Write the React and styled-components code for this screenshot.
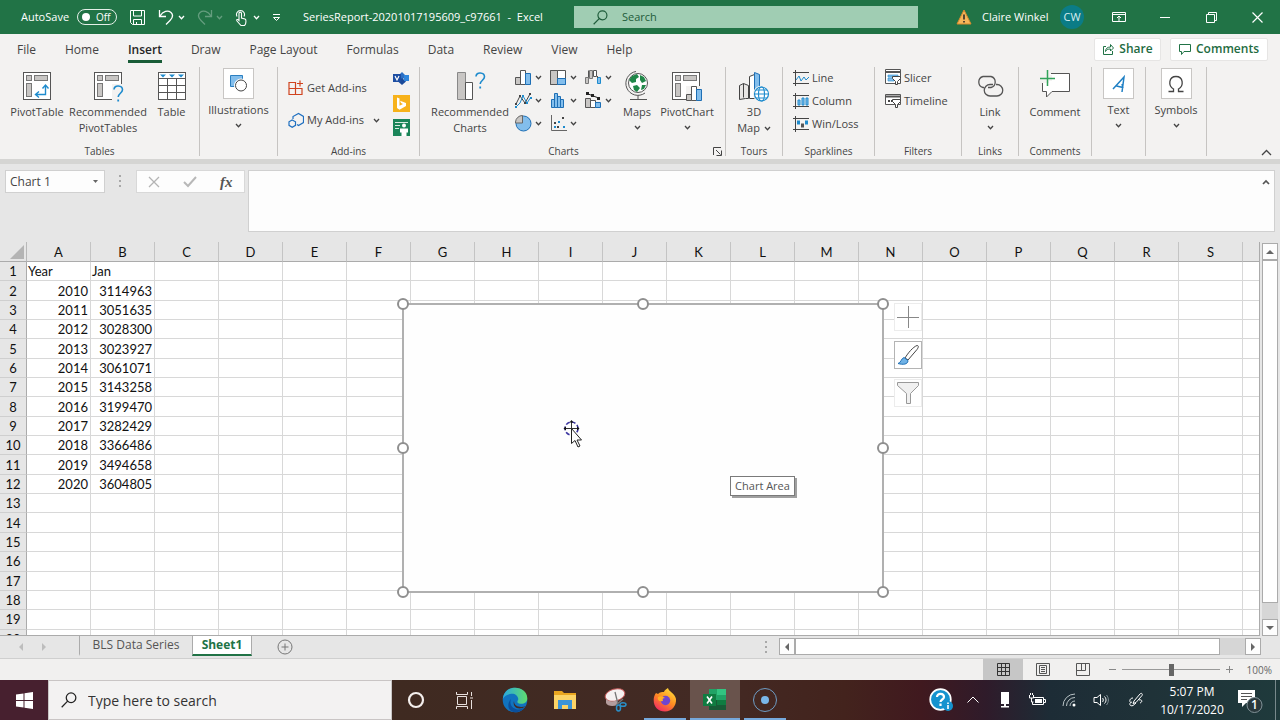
import React, { useState } from 'react';
import styled, { createGlobalStyle, css } from 'styled-components';

const GlobalStyle = createGlobalStyle`
  * {
    box-sizing: border-box;
  }
  body {
    margin: 0;
    font-family: "Open Sans", "Noto Sans", sans-serif;
    font-size: 11px;
    line-height: 16px;
    color: #444;
    overflow: hidden;
  }
  button, input {
    font: inherit;
    color: inherit;
    padding: 0;
    border: 0;
    background: none;
    border-radius: 0;
  }
  input:focus, button:focus {
    outline: none;
  }
  svg {
    display: block;
    flex: none;
  }
`;

const Page = styled.div`
  display: flex;
  flex-direction: column;
  height: 100vh;
  background: #e6e6e6;
`;

/* ---------- title bar ---------- */

const TitleBar = styled.header`
  display: flex;
  align-items: center;
  height: 34px;
  flex: none;
  background: #217346;
  color: #fff;
`;

const QuickAccess = styled.div`
  display: flex;
  align-items: center;
  flex: none;
  width: 574px;
  padding-left: 21px;
`;

const AutoSave = styled.label`
  display: flex;
  align-items: center;
  gap: 8px;
`;

const Toggle = styled.button`
  display: flex;
  align-items: center;
  gap: 6px;
  width: 40px;
  height: 16px;
  padding-left: 4px;
  border: 1px solid #e4efe8;
  border-radius: 8px;
  font-size: 10px;
  line-height: 14px;
  &::before {
    content: "";
    width: 8px;
    height: 8px;
    border-radius: 50%;
    background: #fff;
  }
`;

const QuickButton = styled.button`
  display: flex;
  align-items: center;
  justify-content: space-between;
  height: 24px;
  width: ${(p) => p.$width}px;
  margin-left: 12px;
  opacity: ${(p) => (p.disabled ? 0.3 : 1)};
`;

const DocTitle = styled.h1`
  margin: 0 0 0 22px;
  font-size: 11px;
  line-height: 16px;
  font-weight: 400;
  white-space: pre;
`;

const SearchBox = styled.label`
  display: flex;
  align-items: center;
  gap: 14px;
  flex: 1;
  height: 22px;
  padding-left: 19px;
  background: #a0cdb3;
  color: #1e5c3a;
  input {
    flex: 1;
    min-width: 0;
  }
  input::placeholder {
    color: #1e5c3a;
    opacity: 1;
  }
`;

const Account = styled.div`
  display: flex;
  align-items: center;
  flex: none;
  width: 362px;
  padding-left: 38px;
`;

const UserName = styled.span`
  width: 78px;
  margin-left: 10px;
`;

const Avatar = styled.span`
  width: 24px;
  height: 24px;
  margin-right: 12px;
  border-radius: 50%;
  background: #0b7c86;
  color: #d9eef0;
  line-height: 24px;
  text-align: center;
`;

const WindowButton = styled.button`
  display: flex;
  align-items: center;
  justify-content: center;
  width: 46px;
  height: 34px;
`;

/* ---------- ribbon ---------- */

const TabRow = styled.nav`
  display: flex;
  align-items: center;
  flex: none;
  height: 32px;
  padding: 0 12px 2px 17px;
  background: #f3f2f1;
`;

const TabList = styled.div`
  display: flex;
  gap: 29px;
  flex: 1;
`;

const Tab = styled.button`
  height: 23px;
  padding-bottom: 1px;
  font-size: 12px;
  border-bottom: 3px solid ${(p) => (p.$active ? '#185c37' : 'transparent')};
  font-weight: ${(p) => (p.$active ? 600 : 400)};
  color: ${(p) => (p.$active ? '#262626' : '#444')};
  margin-top: 5px;
  white-space: nowrap;
`;

const ShareButton = styled.button`
  display: flex;
  align-items: center;
  justify-content: center;
  gap: 5px;
  width: ${(p) => p.$width}px;
  height: 23px;
  margin-left: 9px;
  border: 1px solid #e6e5e4;
  border-radius: 2px;
  background: #fff;
  color: #1e6b41;
  font-size: 12px;
  font-weight: 600;
`;

const Ribbon = styled.div`
  display: flex;
  flex: none;
  height: 98px;
  padding-top: 1px;
  background: #f3f2f1;
  border-bottom: 5px solid #d5d5d3;
`;

const Group = styled.section`
  display: flex;
  flex-direction: column;
  flex: none;
  width: ${(p) => p.$width}px;
  height: 89px;
  padding-left: ${(p) => p.$pad || 0}px;
  border-right: 1px solid #c6c4c2;
`;

const GroupBody = styled.div`
  display: flex;
  flex: 1;
  justify-content: ${(p) => (p.$center ? 'center' : 'flex-start')};
`;

const GroupLabel = styled.footer`
  display: flex;
  justify-content: center;
  position: relative;
  height: 12px;
  margin: 0 0 -1px -${(p) => p.$pad || 0}px;
  padding-right: ${(p) => (p.$launcher ? 18 : 0)}px;
  font-size: 10px;
  line-height: 12px;
  button {
    position: absolute;
    right: 3px;
    top: 2px;
  }
`;

const BigButton = styled.button`
  display: flex;
  flex-direction: column;
  align-items: center;
  align-self: flex-start;
  width: ${(p) => p.$width}px;
  padding-top: 3px;
  white-space: nowrap;
  > span {
    margin-top: 2px;
  }
  > svg:last-child {
    margin-top: 4px;
  }
`;

const TileButton = styled(BigButton)`
  padding-top: 1px;
  > span {
    margin-top: 3px;
  }
  > span:first-child {
    display: flex;
    align-items: center;
    justify-content: center;
    width: 31px;
    height: 31px;
    margin: 0;
    border: 1px solid #c8c6c4;
    background: #fff;
  }
`;

const SmallButton = styled.button`
  display: flex;
  align-items: center;
  gap: 3px;
  height: ${(p) => p.$height || 23}px;
  white-space: nowrap;
`;

const SmallColumn = styled.div`
  display: flex;
  flex-direction: column;
  width: ${(p) => p.$width || 'auto'};
  margin-top: ${(p) => p.$top || 0}px;
`;

const MenuText = styled.span`
  margin-right: 6px;
`;

const ChartGrid = styled.div`
  display: grid;
  grid-template-columns: repeat(3, 35px);
  grid-template-rows: repeat(3, 23px);
  width: 102px;
  margin: -1px 0 0 3px;
`;

const CollapseButton = styled.button`
  align-self: flex-end;
  margin: 0 8px 0 auto;
`;

/* ---------- formula bar ---------- */

const FormulaBar = styled.div`
  display: flex;
  flex: none;
  height: 78px;
  padding: 6px 5px 10px;
`;

const NameBox = styled.div`
  display: flex;
  align-items: center;
  width: 100px;
  height: 23px;
  padding-right: 6px;
  border: 1px solid #d0d0d0;
  background: #fdfdfd;
  font-size: 12px;
  input {
    flex: 1;
    min-width: 0;
    padding-left: 4px;
  }
`;

const Grip = styled.span`
  display: flex;
  flex-direction: column;
  gap: 3px;
  margin: ${(p) => p.$margin};
  &::before, &::after, i {
    content: "";
    width: 2px;
    height: 2px;
    background: #a8a8a8;
  }
`;

const FormulaButtons = styled.div`
  display: flex;
  align-items: center;
  justify-content: space-around;
  width: 109px;
  height: 23px;
  border: 1px solid #d8d8d8;
  background: #fdfdfd;
`;

const FxButton = styled.button`
  font-family: "Liberation Serif", serif;
  font-style: italic;
  font-weight: 700;
  font-size: 15px;
  color: #555;
`;

const FormulaField = styled.div`
  display: flex;
  flex: 1;
  align-items: flex-start;
  margin-left: 3px;
  padding: 8px 4px 0 6px;
  border: 1px solid #d0d0d0;
  background: #fdfdfd;
  input {
    flex: 1;
  }
`;

/* ---------- worksheet ---------- */

const SheetRow = styled.main`
  display: flex;
  flex: 1;
  min-height: 0;
`;

const SheetView = styled.div`
  position: relative;
  flex: 1;
  overflow: hidden;
  border-right: 1px solid #ababab;
  border-bottom: 1px solid #ababab;
`;

const Table = styled.table`
  table-layout: fixed;
  width: 1307px;
  height: 407px;
  border-collapse: separate;
  border-spacing: 0;
  background: #fff;
  font-family: Lato, sans-serif;
  font-size: 13px;
  line-height: 16px;
  color: #111;
`;

const headerCell = css`
  padding: 0;
  background: #e6e6e6;
  font-weight: 400;
  text-align: center;
`;

const Corner = styled.td`
  ${headerCell}
  width: 27px;
  height: 20px;
  border-right: 1px solid #b8b8b8;
  border-bottom: 1px solid #ababab;
  svg {
    margin-left: 10px;
  }
`;

const ColHead = styled.th`
  ${headerCell}
  width: 64px;
  height: 20px;
  border-right: 1px solid #c4c4c4;
  border-bottom: 1px solid #ababab;
`;

const RowHead = styled.th`
  ${headerCell}
  border-right: 1px solid #ababab;
  border-bottom: 1px solid #cfcfcf;
`;

const Cell = styled.td`
  padding: 0 2px 0 1px;
  border-right: 1px solid #d8d8d8;
  border-bottom: 1px solid #d8d8d8;
  text-align: ${(p) => (p.$text ? 'left' : 'right')};
`;

const ChartObject = styled.div`
  position: absolute;
  left: 403px;
  top: 62px;
  width: 480px;
  height: 288px;
  background: #fefefe;
  &::before {
    content: "";
    position: absolute;
    inset: -1px;
    border: 2px solid #b0b0b0;
  }
`;

const Handle = styled.span`
  position: absolute;
  left: ${(p) => p.$x};
  top: ${(p) => p.$y};
  width: 12px;
  height: 12px;
  margin: -6px;
  border: 2px solid #8f8f8f;
  border-radius: 50%;
  background: #fff;
`;

const ChartTools = styled.div`
  position: absolute;
  left: 491px;
  top: -1px;
  display: flex;
  flex-direction: column;
  gap: 10px;
  button {
    display: flex;
    align-items: center;
    justify-content: center;
    width: 28px;
    height: 28px;
    border: 1px solid #ececec;
    background: #fff;
  }
  button:nth-child(2) {
    border-color: #b4b4b4;
  }
`;

const Tooltip = styled.div`
  position: absolute;
  left: 730px;
  top: 234px;
  width: 65px;
  height: 20px;
  border: 1px solid #7a7a7a;
  box-shadow: 2px 2px 0 #a0a0a0;
  background: #fff;
  color: #555;
  line-height: 18px;
  text-align: center;
  white-space: nowrap;
`;

const Pointer = styled.div`
  position: absolute;
  left: 562px;
  top: 177px;
`;

const VScroll = styled.div`
  display: flex;
  flex-direction: column;
  flex: none;
  width: 20px;
  padding: 1px 3px 0 2px;
`;

const ScrollButton = styled.button`
  display: flex;
  align-items: center;
  justify-content: center;
  flex: none;
  width: 16px;
  height: 17px;
  border: 1px solid #ababab;
  background: #fdfdfd;
`;

const Track = styled.div`
  display: flex;
  flex-direction: ${(p) => (p.$vertical ? 'column' : 'row')};
  flex: 1;
  background: #d6d6d6;
  &::before {
    content: "";
    flex: 0 0 ${(p) => p.$thumb};
    border: 1px solid #ababab;
    background: #fff;
  }
  width: ${(p) => (p.$vertical ? '16px' : 'auto')};
`;

const SheetTabs = styled.div`
  display: flex;
  flex: none;
  height: 23px;
  border-bottom: 1px solid #cfcfcf;
  color: #555;
  font-size: 12px;
`;

const TabNav = styled.div`
  display: flex;
  align-items: center;
  gap: 15px;
  width: 79px;
  padding-left: 17px;
`;

const SheetTab = styled.button`
  width: ${(p) => p.$width}px;
  height: 20px;
  margin-bottom: 2px;
  line-height: 16px;
  white-space: nowrap;
  border-left: 1px solid #ababab;
  border-right: ${(p) => (p.$active ? '1px solid #ababab' : 0)};
  border-bottom: 2px solid ${(p) => (p.$active ? '#217346' : 'transparent')};
  background: ${(p) => (p.$active ? '#fff' : 'transparent')};
  color: ${(p) => (p.$active ? '#217346' : '#555')};
  font-weight: ${(p) => (p.$active ? 700 : 400)};
`;

const AddSheet = styled.button`
  margin: 0 auto 0 25px;
`;

const HScroll = styled.div`
  display: flex;
  flex: none;
  width: calc(38% - 4px);
  height: 17px;
  margin: 2px 19px 0 0;
`;

const StatusBar = styled.footer`
  display: flex;
  align-items: center;
  justify-content: flex-end;
  flex: none;
  height: 21px;
  padding-right: 8px;
  background: #f1f0ef;
  font-size: 10px;
  color: #666;
`;

const ViewButton = styled.button`
  display: flex;
  align-items: center;
  justify-content: center;
  width: 40px;
  height: 21px;
  background: ${(p) => (p.$active ? '#c6c6c6' : 'transparent')};
`;

const ZoomControl = styled.div`
  display: flex;
  align-items: center;
  gap: 5px;
  margin-left: 5px;
`;

const ZoomSlider = styled.input`
  appearance: none;
  width: 98px;
  height: 12px;
  margin: 0;
  background: linear-gradient(#999, #999) center / 100% 1px no-repeat;
  &::-webkit-slider-thumb {
    appearance: none;
    width: 5px;
    height: 12px;
    background: #666;
  }
`;

const ZoomValue = styled.span`
  width: 38px;
  text-align: right;
`;

/* ---------- taskbar ---------- */

const Taskbar = styled.footer`
  display: flex;
  flex: none;
  height: 40px;
  background: linear-gradient(90deg, #47202f 0, #47202f 4%, #3f2a21 31%, #432a24 55%, #43231d 66%, #40191f 72%, #2f1b2a 77%, #1d2c36 82%, #1f3238 90%, #1f3a3c 100%);
  color: #fff;
`;

const StartButton = styled.button`
  display: flex;
  align-items: center;
  justify-content: center;
  width: 48px;
`;

const TaskSearch = styled.label`
  display: flex;
  align-items: center;
  gap: 11px;
  width: 344px;
  padding-left: 12px;
  border: 1px solid #c9c5c5;
  background: #f3f2f2;
  font-size: 14px;
  color: #333;
  input {
    flex: 1;
    min-width: 0;
    padding-top: 1px;
  }
  input::placeholder {
    color: #333;
    opacity: 1;
  }
`;

const TaskButton = styled.button`
  display: flex;
  align-items: center;
  justify-content: center;
  width: ${(p) => p.$width || 50}px;
  background: ${(p) => (p.$active ? '#69534c' : 'transparent')};
  border-top: 2px solid transparent;
  border-bottom: 2px solid ${(p) => (p.$active || p.$running ? '#76a9dc' : 'transparent')};
  ${(p) => p.$running && css`
    margin: 0 4px;
    width: 42px;
  `}
`;

const Tray = styled.div`
  display: flex;
  margin-left: auto;
  padding-right: 4px;
  border-right: 1px solid #78898c;
  margin-right: 4px;
`;

const TrayButton = styled.button`
  display: flex;
  align-items: center;
  justify-content: center;
  width: ${(p) => p.$width || 32}px;
`;

const Clock = styled.time`
  width: 74px;
  padding-top: 3px;
  font-size: 12px;
  line-height: 18px;
  text-align: center;
`;

/* ---------- icons ---------- */

const Svg = ({ w = 32, h = w, children, ...rest }) => (
  <svg width={w} height={h} viewBox={`0 0 ${w} ${h}`} fill="none" stroke="#555" aria-hidden="true" {...rest}>
    {children}
  </svg>
);

const Chevron = ({ color = '#444' }) => (
  <Svg w={7} h={7} stroke={color}><path d="M1 2l2.5 2.7L6 2" strokeWidth="1.3" /></Svg>
);

const Triangle = ({ dir = 'down', color = '#666' }) => {
  const points = { down: 'M0 2h8L4 6z', up: 'M0 6h8L4 2z', left: 'M6 0v8L2 4z', right: 'M2 0v8l4-4z' };
  return <Svg w={8} stroke="none"><path d={points[dir]} fill={color} /></Svg>;
};

const PivotFrame = () => (
  <>
    <rect x="2.5" y="2.5" width="27" height="27" fill="#fff" />
    <rect x="5.5" y="5.5" width="5" height="5" fill="#c8c6c4" stroke="#777" />
    <rect x="13.5" y="5.5" width="13" height="5" fill="#c8c6c4" stroke="#777" />
    <rect x="5.5" y="13.5" width="5" height="13" fill="#c8c6c4" stroke="#777" />
  </>
);

const Question = ({ x, y }) => (
  <g transform={`translate(${x} ${y})`} stroke="#1e8bcd" strokeWidth="1.6">
    <path d="M1 4.500c0-5 8.500-4.500 8.500.3C9.500 8 5.200 8.500 5.200 12" />
    <path d="M5.200 14.500v2" strokeWidth="1.8" />
  </g>
);

const PivotTableIcon = () => (
  <Svg>
    <PivotFrame />
    <path d="M15 24.500h9.500v-9M18 21.500l-3.500 3 3.500 3M21.500 18.500l3-3.500 3 3.500" stroke="#1e8bcd" strokeWidth="1.4" />
  </Svg>
);

const RecommendedPivotIcon = () => (
  <Svg w={32} h={32}>
    <PivotFrame />
    <path d="M20 14h12v18H20z" fill="#f3f2f1" stroke="none" />
    <path d="M29.500 2v12" />
    <Question x={21} y={15} />
  </Svg>
);

const TableIcon = () => (
  <Svg>
    <rect x="2.500" y="2.500" width="27" height="27" fill="#fff" />
    <path d="M2 8.500h28M2 15.500h28M2 22.500h28M11.500 8v22M20.500 8v22" />
    <path d="M4 4.500h6l-3 3zM13 4.500h6l-3 3zM22 4.500h6l-3 3z" fill="#1e8bcd" stroke="none" />
  </Svg>
);

const ShapesIcon = () => (
  <Svg w={21}>
    <path d="M2.500 2.500h12v11h-12z" fill="#83beec" stroke="#2b7fc1" />
    <circle cx="13" cy="12.500" r="6.500" fill="#fff" stroke="#fff" />
    <circle cx="13" cy="12.500" r="5.500" fill="#fff" stroke="#444" />
  </Svg>
);

const StoreIcon = () => (
  <Svg w={16} stroke="#d0431f" strokeWidth="1.200">
    <path d="M7 2.500H1v6h13v6H1v-6M7.500 2v12.500M12 .5v6M9 3.500h6" />
  </Svg>
);

const MyAddinsIcon = () => (
  <Svg w={16} h={17} stroke="#1e6fc0" strokeWidth="1.200">
    <path d="M5 7V4.500L10.500 1.500l5 3V10.500l-5 3L9 12.500" />
    <path d="M4.200 8l3.300 1.800v3.500l-3.300 2L1 13.300V9.800z" />
  </Svg>
);

const VisioIcon = () => (
  <Svg w={16} stroke="none">
    <path d="M9 1l4 4-4 4-4-4z" fill="#2b6fc4" />
    <path d="M9 7l4 3.500L9 14l-4-3.500z" fill="#1a4a9a" />
    <path d="M11 4h5v6h-5z" fill="#2f86dc" />
    <path d="M0 3h8v8H0z" fill="#1d4ea2" />
    <path d="M2 5l2 4 2-4" stroke="#fff" strokeWidth="1.200" />
  </Svg>
);

const BingIcon = () => (
  <Svg w={17} stroke="none">
    <path d="M0 0h17v17H0z" fill="#f7b21a" />
    <path d="M4 2.500l2.500 1v7.200L10 9 8 8 7 5.700 13 8v3l-6.500 3.700L4 13z" fill="#fff" />
  </Svg>
);

const PeopleIcon = () => (
  <Svg w={17} stroke="none">
    <path d="M0 0h17v17H0z" fill="#1a8559" />
    <path d="M2 3.500h13M2 6.500h5M2 9.500h4" stroke="#d7ebe1" strokeWidth="1.200" />
    <circle cx="11" cy="6.500" r="2" fill="#fff" />
    <path d="M7 9.500h8v4h-1.500V17h-5v-3.500H7z" fill="#fff" />
  </Svg>
);

const RecommendedChartIcon = () => (
  <Svg w={32}>
    <path d="M3.500 2.500h8v27h-8z" fill="#c8c6c4" stroke="#888" />
    <path d="M11.500 12.500h7v17h-7z" fill="#fff" />
    <Question x={21} y={2} />
  </Svg>
);

const ColumnIcon = () => (
  <Svg w={17} h={17}>
    <path d="M.5 8.500h5v7h-5z" fill="#c8c6c4" />
    <path d="M5.500 1.500h5v14h-5z" fill="#fff" />
    <path d="M10.500 4.500h5v11h-5z" fill="#83beec" stroke="#1e6fb5" />
  </Svg>
);

const TreemapIcon = () => (
  <Svg w={17} h={17}>
    <path d="M.5 1.500h15v14H.5z" fill="#fff" />
    <path d="M.5 1.500h7v14h-7z" fill="#c8c6c4" />
    <path d="M7.500 9.500h8v6h-8z" fill="#83beec" stroke="#1e6fb5" />
  </Svg>
);

const WaterfallIcon = () => (
  <Svg w={17} h={17}>
    <path d="M.5 8.500h3v6h-3zM4.500 1.500h3v8h-3z" fill="#c8c6c4" stroke="#777" />
    <path d="M8.500 1.500h3v6h-3z" fill="#fff" />
    <path d="M12.500 8.500h3v6h-3z" fill="#83beec" stroke="#1e8bcd" />
    <path d="M3.500 8.500V1.500M12.500 7v2" />
  </Svg>
);

const LineIcon = () => (
  <Svg w={17} h={17}>
    <path d="M1 12l4-8 5 7 5-9" stroke="#444" />
    <path d="M1 15l4-4 3-7 4 7 4-6" stroke="#1e8bcd" />
    <path d="M0 11h2v2H0zM4 3h2v2H4zM9 10h2v2H9zM14 1h2v2h-2z" fill="#444" stroke="none" />
    <path d="M0 14h2v2H0zM7 3h2v2H7zM11 10h2v2h-2zM15 5h2v2h-2z" fill="#1e8bcd" stroke="none" />
  </Svg>
);

const HistogramIcon = () => (
  <Svg w={17} h={17}>
    <path d="M1.500 7.500h3v8h-3zM4.500 1.500h3v14h-3zM7.500 4.500h3v11h-3zM10.500 7.500h3v8h-3z" fill="#83beec" stroke="#1e6fb5" />
  </Svg>
);

const ComboIcon = () => (
  <Svg w={17} h={17}>
    <path d="M.5 6.500h5v9h-5z" fill="#c8c6c4" />
    <path d="M5.500 8.500h5v7h-5z" fill="#fff" />
    <path d="M10.500 10.500h5v5h-5z" fill="#83beec" stroke="#1e6fb5" />
    <path d="M2 1.500l5 2 8 3" stroke="#222" />
    <path d="M1 0h3v3H1zM6 2h3v3H6zM12 5h3v3h-3z" fill="#222" stroke="none" />
  </Svg>
);

const PieIcon = () => (
  <Svg w={17} h={17}>
    <circle cx="8.500" cy="8.500" r="7.500" fill="#83beec" stroke="#1e6fb5" />
    <path d="M.5 8V7A7 7 0 0 1 7.500.5V8z" fill="#c8c6c4" stroke="#666" />
  </Svg>
);

const ScatterIcon = () => (
  <Svg w={17} h={17}>
    <path d="M1.500 0v15.500H17" stroke="#666" />
    <path d="M4 7h2v2H4zM7 11h2v2H7zM12 2h2v2h-2z" fill="#444" stroke="none" />
    <path d="M4 11h2v2H4zM8 6h2v2H8zM13 11h2v2h-2z" fill="#1e8bcd" stroke="none" />
  </Svg>
);

const MapsIcon = () => (
  <Svg w={32}>
    <circle cx="17" cy="13" r="9.500" fill="#fff" />
    <path d="M11 6l5-2 2 3-3 2v3l-4 1-3-3zM19 5l4 2 2 4-4 2-2-3zM12 16l4-1 3 3-3 4-3-2zM21 15l4 0-2 4-3 1z" fill="#1f8748" stroke="none" />
    <path d="M15 1.500A12 12 0 1 0 24 23M17 25v4M9 29.500h17" />
  </Svg>
);

const PivotChartIcon = () => (
  <Svg w={34} h={32}>
    <PivotFrame />
    <path d="M16 16h18v16H16z" fill="#f3f2f1" stroke="none" />
    <path d="M16.500 24.500h5v6h-5z" fill="#c8c6c4" />
    <path d="M21.500 16.500h5v14h-5z" fill="#fff" />
    <path d="M26.500 19.500h5v11h-5z" fill="#83beec" stroke="#1e6fb5" />
    <path d="M29.500 2v14" />
  </Svg>
);

const Map3DIcon = () => (
  <Svg w={34} h={32}>
    <path d="M2.500 15.500l4-2 5 2v13h-3l-6 1z" fill="#e8e6e4" stroke="#444" />
    <path d="M6.500 13.500v14M12.500 6.500l5-2v24h-5z" fill="#fff" stroke="#444" />
    <path d="M17.500 2.500l5 2v20h-5z" fill="#83beec" stroke="#1e6fb5" />
    <circle cx="24.500" cy="24" r="8" fill="#f3f2f1" stroke="#f3f2f1" />
    <g stroke="#1e8bcd" strokeWidth="1.200">
      <circle cx="24.500" cy="24" r="7" fill="#fff" />
      <ellipse cx="24.500" cy="24" rx="3" ry="7" />
      <path d="M17.500 24h14M19 20h11M19 28h11" />
    </g>
  </Svg>
);

const SparkFrame = () => <path d="M0 2.500h16M0 13.500h16M2.500 0v16" stroke="#444" />;

const SparkLineIcon = () => (
  <Svg w={16}><SparkFrame /><path d="M3 10l3-4 2 5 3-4 2 3 3-3" stroke="#1e8bcd" /></Svg>
);

const SparkColumnIcon = () => (
  <Svg w={16}><SparkFrame /><path d="M5 7h2v5H5zM9 5h2v7H9zM13 5h2v7h-2z" fill="#83beec" stroke="#1e8bcd" /></Svg>
);

const WinLossIcon = () => (
  <Svg w={16}><SparkFrame /><path d="M4 4.500h3v4H4zM12 4.500h3v4h-3z" fill="#1e8bcd" stroke="none" /><path d="M8 7.500h3v4H8z" fill="#555" stroke="none" /></Svg>
);

const FilterShape = () => <path d="M7.500 7.500h8v2l-3 3v3h-2v-3l-3-3z" fill="#fff" stroke="#444" />;

const SlicerIcon = () => (
  <Svg w={16} h={17}>
    <path d="M.5.5h15v14H.5z" fill="#fff" />
    <path d="M1 3h14" strokeWidth="2" />
    <path d="M3 6h10v2H3zM3 9h6v3H3z" fill="#83beec" stroke="#1e8bcd" strokeWidth=".6" />
    <FilterShape />
  </Svg>
);

const TimelineIcon = () => (
  <Svg w={16} h={17}>
    <path d="M.5 2.500h15v10H.5z" fill="#fff" />
    <path d="M1 4.500h14" strokeWidth="2" />
    <path d="M3 8h2v2H3zM6 8h2v2H6z" fill="#444" stroke="none" />
    <FilterShape />
  </Svg>
);

const LinkIcon = () => (
  <Svg w={32} strokeWidth="1.300">
    <path d="M10 17.500H9A5.700 5.700 0 0 1 9 6.500h8a5.700 5.700 0 0 1 0 11h-3" />
    <path d="M22 14.500h1a5.700 5.700 0 0 1 0 11.500h-7a5.700 5.700 0 0 1 0-11.500h3" />
  </Svg>
);

const CommentIcon = () => (
  <Svg>
    <path d="M12 3.500h18.500v18H13L7.500 27v-5.500h-4V13" fill="#fff" stroke="#555" />
    <path d="M4 1h6v12H4zM1 5h12v6H1z" fill="#f3f2f1" stroke="none" />
    <path d="M8.500 0v16M1 8.500h15" stroke="#31a35a" strokeWidth="1.500" />
  </Svg>
);

const TextIcon = () => (
  <Svg w={20} stroke="#1e7fc4" strokeWidth="1.500"><path d="M4 15L15 3l-2 15M7.500 12l6.500 1.500M13 10l1 4" /></Svg>
);

const OmegaIcon = () => (
  <Svg w={20} strokeWidth="1.300" stroke="#444">
    <path d="M2.500 17.500h5v-2.500C2 12 2.500 2.500 10 2.500s8 9.500 2.500 12.500v2.500h5" />
  </Svg>
);

const SearchIcon = ({ size = 14, color }) => (
  <svg width={size} height={size} viewBox="0 0 14 14" fill="none" stroke={color} strokeWidth="1.100" aria-hidden="true">
    <circle cx="8.800" cy="5" r="4.200" />
    <path d="M5.800 8L.6 13.300" />
  </svg>
);

const BrushIcon = () => (
  <Svg w={24} stroke="#444">
    <path d="M9 15C12 10 17 4 21 2.500c2 0 1.500 2 0 4C18 10 15 13.500 12 17z" fill="#fff" />
    <path d="M8 14.500l4 3c0 4-5 4.500-10 3 3-.5 3-5 6-6z" fill="#6fb2e6" stroke="#1e6fb5" />
  </Svg>
);

/* ---------- ribbon pieces ---------- */

const RibbonGroup = ({ label, width, pad, center, launcher, children }) => (
  <Group $width={width} $pad={pad}>
    <GroupBody $center={center}>{children}</GroupBody>
    {label && (
      <GroupLabel $pad={pad} $launcher={launcher}>
        {label}
        {launcher && (
          <button aria-label="See All Charts">
            <Svg w={9}><path d="M.5 8V.5H8M3 3l4.500 4.500M8.500 3.500v5h-5" stroke="#444" /></Svg>
          </button>
        )}
      </GroupLabel>
    )}
  </Group>
);

const Big = ({ icon, lines, width, menu }) => (
  <BigButton $width={width}>
    {icon}
    <span>{lines.map((line, i) => <React.Fragment key={i}>{i > 0 && <br />}{line}</React.Fragment>)}</span>
    {menu && <Chevron />}
  </BigButton>
);

const Tile = ({ icon, label, width }) => (
  <TileButton $width={width}>
    <span>{icon}</span>
    <span>{label}</span>
    <Chevron />
  </TileButton>
);

const MapLabel = styled.span`
  display: inline-flex;
  align-items: center;
  gap: 4px;
`;

const chartTypes = [
  ['Column', ColumnIcon], ['Hierarchy', TreemapIcon], ['Waterfall', WaterfallIcon],
  ['Line', LineIcon], ['Statistic', HistogramIcon], ['Combo', ComboIcon],
  ['Pie', PieIcon], ['Scatter', ScatterIcon],
];

const tabs = ['File', 'Home', 'Insert', 'Draw', 'Page Layout', 'Formulas', 'Data', 'Review', 'View', 'Help'];
const columns = 'ABCDEFGHIJKLMNOPQRS'.split('');
const data = [
  ['Year', 'Jan'],
  [2010, 3114963],
  [2011, 3051635],
  [2012, 3028300],
  [2013, 3023927],
  [2014, 3061071],
  [2015, 3143258],
  [2016, 3199470],
  [2017, 3282429],
  [2018, 3366486],
  [2019, 3494658],
  [2020, 3604805],
];
const handles = [
  ['0%', '0%'], ['50%', '0%'], ['100%', '0%'],
  ['0%', '50%'], ['100%', '50%'],
  ['0%', '100%'], ['50%', '100%'], ['100%', '100%'],
];

const Header = () => (
  <TitleBar>
    <QuickAccess>
      <AutoSave>AutoSave<Toggle>Off</Toggle></AutoSave>
      <QuickButton $width={17} aria-label="Save">
        <Svg w={17} stroke="#fff"><path d="M1.500 1.500h14v14h-12l-2-2zM4.500 2v5h8V2M4.500 15v-4.500h8V15M7.500 13v2" /></Svg>
      </QuickButton>
      <QuickButton $width={27} aria-label="Undo">
        <Svg w={16} stroke="#fff" strokeWidth="1.300"><path d="M1.500 1v6.500H8M2 7C5 2 10 1 13 3.500c3 3 1 6-1 8l-4 4" /></Svg>
        <Chevron color="#fff" />
      </QuickButton>
      <QuickButton $width={26} disabled aria-label="Redo">
        <Svg w={16} stroke="#fff" strokeWidth="1.300"><path d="M14.500 1v6.500H8M14 7C11 2 6 1 3 3.500c-3 3-1 6 1 8l4 4" /></Svg>
        <Chevron color="#fff" />
      </QuickButton>
      <QuickButton $width={25} aria-label="Touch/Mouse Mode">
        <Svg w={12} h={17} stroke="#fff" strokeWidth="1.100">
          <path d="M2 7.500a4 4 0 1 1 7 0M4 11.500V4.500c0-1.800 2.500-1.800 2.500 0V9l3.500 1c1.500.5 1 3 .5 5l-1 1.500H6L2 12c-1-1.500.5-2 1.500-1z" />
        </Svg>
        <Chevron color="#fff" />
      </QuickButton>
      <QuickButton $width={9} aria-label="Customize Quick Access Toolbar">
        <Svg w={9} stroke="#fff"><path d="M1 1.500h7M1.500 4.500l3 3 3-3z" /></Svg>
      </QuickButton>
      <DocTitle>{'SeriesReport-20201017195609_c97661  -  Excel'}</DocTitle>
    </QuickAccess>
    <SearchBox>
      <SearchIcon size={15} color="#1e5c3a" />
      <input placeholder="Search" aria-label="Search" />
    </SearchBox>
    <Account>
      <Svg w={16} stroke="none">
        <path d="M8 1l7 14H1z" fill="#f6b65a" stroke="#d98a2b" />
        <path d="M8 5.500v5M8 12v1.500" stroke="#222" strokeWidth="1.500" />
      </Svg>
      <UserName>Claire Winkel</UserName>
      <Avatar>CW</Avatar>
      <WindowButton aria-label="Ribbon Display Options">
        <Svg w={14} h={12} stroke="#fff"><path d="M.5 1.500h13v9H.5zM.5 3.500h13M7 10V5M5 7l2-2 2 2" /></Svg>
      </WindowButton>
      <WindowButton aria-label="Minimize"><Svg w={11} stroke="#fff"><path d="M0 5.500h10" /></Svg></WindowButton>
      <WindowButton aria-label="Restore Down">
        <Svg w={11} stroke="#fff"><path d="M.5 2.500h8v8h-8zM2.500 2V.5h8v8H9" /></Svg>
      </WindowButton>
      <WindowButton aria-label="Close"><Svg w={11} stroke="#fff" strokeWidth="1.200"><path d="M.5.500l10 10M10.500.500l-10 10" /></Svg></WindowButton>
    </Account>
  </TitleBar>
);

const InsertRibbon = () => (
  <Ribbon>
    <RibbonGroup label="Tables" width={200} pad={8}>
      <Big icon={<PivotTableIcon />} lines={['PivotTable']} width={58} />
      <Big icon={<RecommendedPivotIcon />} lines={['Recommended', 'PivotTables']} width={84} />
      <Big icon={<TableIcon />} lines={['Table']} width={43} />
    </RibbonGroup>
    <RibbonGroup width={78} center>
      <Tile icon={<ShapesIcon />} label="Illustrations" width={70} />
    </RibbonGroup>
    <RibbonGroup label="Add-ins" width={142} pad={10}>
      <SmallColumn $width="105px" $top={5}>
        <SmallButton $height={32}><StoreIcon />Get Add-ins</SmallButton>
        <SmallButton $height={32}><MyAddinsIcon /><MenuText>My Add-ins</MenuText><Chevron /></SmallButton>
      </SmallColumn>
      <SmallColumn>
        <SmallButton $height={24} aria-label="Visio Data Visualizer"><VisioIcon /></SmallButton>
        <SmallButton $height={24} aria-label="Bing Maps"><BingIcon /></SmallButton>
        <SmallButton $height={24} aria-label="People Graph"><PeopleIcon /></SmallButton>
      </SmallColumn>
    </RibbonGroup>
    <RibbonGroup label="Charts" width={306} pad={8} launcher>
      <Big icon={<RecommendedChartIcon />} lines={['Recommended', 'Charts']} width={84} />
      <ChartGrid>
        {chartTypes.map(([name, Icon]) => (
          <SmallButton key={name} aria-label={`Insert ${name} Chart`}><Icon /><Chevron /></SmallButton>
        ))}
      </ChartGrid>
      <Big icon={<MapsIcon />} lines={['Maps']} width={40} menu />
      <Big icon={<PivotChartIcon />} lines={['PivotChart']} width={60} menu />
    </RibbonGroup>
    <RibbonGroup label="Tours" width={57} center>
      <Big icon={<Map3DIcon />} lines={['3D', <MapLabel>Map <Chevron /></MapLabel>]} width={50} />
    </RibbonGroup>
    <RibbonGroup label="Sparklines" width={92} pad={10}>
      <SmallColumn $top={-1}>
        <SmallButton><SparkLineIcon />Line</SmallButton>
        <SmallButton><SparkColumnIcon />Column</SmallButton>
        <SmallButton><WinLossIcon />Win/Loss</SmallButton>
      </SmallColumn>
    </RibbonGroup>
    <RibbonGroup label="Filters" width={87} pad={10}>
      <SmallColumn $top={-1}>
        <SmallButton><SlicerIcon />Slicer</SmallButton>
        <SmallButton><TimelineIcon />Timeline</SmallButton>
      </SmallColumn>
    </RibbonGroup>
    <RibbonGroup label="Links" width={57} center>
      <Big icon={<LinkIcon />} lines={['Link']} width={50} menu />
    </RibbonGroup>
    <RibbonGroup label="Comments" width={73} center>
      <Big icon={<CommentIcon />} lines={['Comment']} width={64} />
    </RibbonGroup>
    <RibbonGroup width={54} center>
      <Tile icon={<TextIcon />} label="Text" width={50} />
    </RibbonGroup>
    <RibbonGroup width={61} center>
      <Tile icon={<OmegaIcon />} label="Symbols" width={56} />
    </RibbonGroup>
    <CollapseButton aria-label="Collapse the Ribbon">
      <Svg w={11} stroke="#444" strokeWidth="1.300"><path d="M1 7l4.500-4.500L10 7" /></Svg>
    </CollapseButton>
  </Ribbon>
);

const Worksheet = () => (
  <SheetRow>
    <SheetView>
      <Table>
        <thead>
          <tr>
            <Corner><Svg w={14} stroke="none"><path d="M14 0v14H0z" fill="#b4b4b4" /></Svg></Corner>
            {columns.map((c) => <ColHead key={c} scope="col">{c}</ColHead>)}
            <ColHead scope="col" aria-label="T" />
          </tr>
        </thead>
        <tbody>
          {Array.from({ length: 20 }, (_, r) => (
            <tr key={r}>
              <RowHead scope="row">{r + 1}</RowHead>
              {Array.from({ length: 20 }, (_, c) => (
                <Cell key={c} $text={r === 0}>{data[r] && data[r][c]}</Cell>
              ))}
            </tr>
          ))}
        </tbody>
      </Table>
      <ChartObject>
        {handles.map(([x, y]) => <Handle key={x + y} $x={x} $y={y} />)}
        <ChartTools>
          <button aria-label="Chart Elements">
            <Svg w={22} stroke="#888"><path d="M11.500 0v22M0 11.500h22" /></Svg>
          </button>
          <button aria-label="Chart Styles"><BrushIcon /></button>
          <button aria-label="Chart Filters">
            <Svg w={24} stroke="#999"><path d="M1.500 1.500h21v3l-8 8v10h-4v-10l-9-8z" fill="#f0f0f0" /></Svg>
          </button>
        </ChartTools>
      </ChartObject>
      <Pointer>
        <Svg w={20} h={30}>
          <circle cx="9.500" cy="9.500" r="6.500" stroke="#3a34a0" strokeWidth="1.600" strokeDasharray="4 2" />
          <path d="M9.500 2v15M2 9.500h15" stroke="#333" />
          <path d="M9.500 1l2 2.500h-4zM1.500 9.500L4 7.500v4zM17.500 9.500L15 7.500v4z" fill="#111" stroke="none" />
          <path d="M9.500 9.500v15l3.500-3 3 6.500 2-1-3-6h4.500z" fill="#fff" stroke="#222" />
        </Svg>
      </Pointer>
      <Tooltip role="tooltip">Chart Area</Tooltip>
    </SheetView>
    <VScroll>
      <ScrollButton aria-label="Scroll up"><Triangle dir="up" /></ScrollButton>
      <Track $vertical $thumb="95%" />
      <ScrollButton aria-label="Scroll down"><Triangle /></ScrollButton>
    </VScroll>
  </SheetRow>
);

const WindowsBar = () => (
  <Taskbar>
    <StartButton aria-label="Start">
      <Svg w={17} stroke="none"><path d="M0 2.500l7.500-1v6.500H0zM8.500 1.300L17 0v8H8.500zM0 9h7.500v6.500L0 14.500zM8.500 9H17v8l-8.500-1.300z" fill="#fff" /></Svg>
    </StartButton>
    <TaskSearch>
      <SearchIcon size={16} color="#222" />
      <input placeholder="Type here to search" aria-label="Type here to search" />
    </TaskSearch>
    <TaskButton $width={48} aria-label="Cortana"><Svg w={18}><circle cx="9" cy="9" r="7" stroke="#f4efed" strokeWidth="2.200" /></Svg></TaskButton>
    <TaskButton $width={48} aria-label="Task View">
      <Svg w={18} h={17} stroke="#e8e0de"><path d="M2.500 4.500h9v8h-9zM1.500 0v2.500h11V0M1.500 17v-2.500h11V17M16.500 0v4M16.500 8v9M15 6h3" /></Svg>
    </TaskButton>
    <TaskButton $width={53} aria-label="Microsoft Edge">
      <svg width="26" height="26" viewBox="0 0 26 26" aria-hidden="true">
        <defs>
          <linearGradient id="edgeTop" x1="0" x2="1"><stop offset="0" stopColor="#2aa7df" /><stop offset="1" stopColor="#5fdc6e" /></linearGradient>
        </defs>
        <circle cx="13" cy="13" r="12.300" fill="#1173bf" />
        <path d="M.8 12C2 4 7 .7 13 .7c7 0 12.300 4.500 12.300 10.500 0 5-5 6.500-9 5-2-1-.5-2 0-4C16 8 12 6 8 7c-3 .7-6 2.500-7.200 5z" fill="url(#edgeTop)" />
        <path d="M9 12c-2 5 1 10 7 10.500 3 0 5-1 7-2.500-3 5-9 6.500-14 4-4-3-3-9 0-12z" fill="#0b4f9c" />
        <path d="M24 19c-5 2-12 1-12-5-2 6 5 10.500 12 5z" fill="#432a24" />
      </svg>
    </TaskButton>
    <TaskButton $width={48} aria-label="File Explorer">
      <Svg w={22} h={20} stroke="none">
        <path d="M0 1h8l2 2h12v16H0z" fill="#e9a620" />
        <path d="M0 5h22v14H0z" fill="#fbd467" />
        <path d="M4 19v-9h14v9h-4v-4H8v4z" fill="#3a94d8" />
      </Svg>
    </TaskButton>
    <TaskButton $width={51} aria-label="Snipping Tool">
      <Svg w={24}>
        <ellipse cx="12" cy="7" rx="10" ry="6" transform="rotate(-15 12 7)" fill="#f5f1f1" stroke="#c45b5b" />
        <path d="M3 11c3 3 8 3 11 1v5c-4 2-10 1-11-2z" fill="#b49c9c" stroke="none" />
        <path d="M12 4l3 12M20 11l-7 6" stroke="#777" strokeWidth="1.300" />
        <ellipse cx="20" cy="16.500" rx="3" ry="1.800" stroke="#2a8fc8" strokeWidth="1.500" />
        <ellipse cx="15.500" cy="20" rx="2" ry="3" stroke="#2a8fc8" strokeWidth="1.500" />
      </Svg>
    </TaskButton>
    <TaskButton $running aria-label="Firefox">
      <svg width="24" height="24" viewBox="0 0 24 24" aria-hidden="true">
        <defs>
          <linearGradient id="fox" x1=".8" y1="0" x2=".2" y2="1"><stop offset="0" stopColor="#ffe13a" /><stop offset=".5" stopColor="#ff8a22" /><stop offset="1" stopColor="#ef2468" /></linearGradient>
        </defs>
        <path d="M3 5l2 1c2-2 4-2 6-2 0-1 2-3 4-4 0 3 7 5 8 11 .6 7-4.500 12.500-11 12.500S.5 19 .7 12C.7 9 1.500 7 3 5z" fill="url(#fox)" />
        <circle cx="12.500" cy="12.500" r="4.700" fill="#7045d0" />
        <path d="M5 9c3-2 6 0 7 1-2 0-3 1-2 3-4 1-6-1-5-4z" fill="#ffad26" />
      </svg>
    </TaskButton>
    <TaskButton $active aria-label="Excel">
      <Svg w={24} stroke="none">
        <path d="M6 1h17v21H6z" fill="#21a366" />
        <path d="M14 1h9v6h-9z" fill="#33c481" />
        <path d="M6 12h17v10H6z" fill="#185c37" />
        <path d="M14 12h9v5h-9z" fill="#107c41" />
        <path d="M0 6h13v12H0z" fill="#107c41" />
        <path d="M4 8.500l5 7M9 8.500l-5 7" stroke="#fff" strokeWidth="1.600" />
      </Svg>
    </TaskButton>
    <TaskButton $running aria-label="Screen Recorder">
      <Svg w={26}><circle cx="13" cy="13" r="11.500" stroke="#6e9cc4" /><circle cx="13" cy="13" r="4" fill="#79b6e8" stroke="none" /></Svg>
    </TaskButton>
    <Tray>
      <TrayButton aria-label="Get Help">
        <Svg w={24}>
          <circle cx="11.500" cy="11.500" r="10.300" fill="#1593cf" stroke="#fff" strokeWidth="1.700" />
          <path d="M8 9c0-4.500 7-4 7 0 0 2.500-3.500 2.500-3.500 5M11.500 15.500v2.500" stroke="#fff" strokeWidth="2.200" />
          <circle cx="19" cy="18" r="5" fill="#1593cf" stroke="none" />
          <path d="M19 17v4M19 14.500v1.500" stroke="#fff" strokeWidth="1.600" />
        </Svg>
      </TrayButton>
      <TrayButton aria-label="Show hidden icons"><Svg w={14} stroke="#fff"><path d="M1.500 9.500L7 4l5.500 5.500" /></Svg></TrayButton>
      <TrayButton aria-label="Microphone"><Svg w={12} h={18} stroke="none"><path d="M2 1h8v12H2zM5 13h2v3H5zM2 15h8v1.500H2z" fill="#fff" /></Svg></TrayButton>
      <TrayButton aria-label="Battery">
        <Svg w={18} h={14} stroke="#fff"><path d="M6 4.500h9.500v7h-11V9M15.500 6.500h2v3h-2" /><path d="M7 6h7v4H7z" fill="#fff" stroke="none" /><path d="M1.500 2v3h4V2M2.500 0v2M4.500 0v2M3.500 5v4h2" /></Svg>
      </TrayButton>
      <TrayButton aria-label="Network">
        <Svg w={14} stroke="#b9c3c6"><path d="M1 13A12 12 0 0 1 13 1M4.500 13A8.500 8.500 0 0 1 13 4.500M8 13a5 5 0 0 1 5-5" /><circle cx="12" cy="12" r="1.500" fill="#fff" stroke="none" /></Svg>
      </TrayButton>
      <TrayButton aria-label="Volume">
        <Svg w={16} h={14} stroke="#fff"><path d="M1 4.500h3L7.500 1.500v11L4 9.500H1zM9.500 5c1 1 1 3 0 4M11.500 3.500c2 2 2 5 0 7" /><path d="M13.500 2c2.500 3 2.500 7 0 10" stroke="#829298" /></Svg>
      </TrayButton>
      <TrayButton $width={38} aria-label="Pen">
        <Svg w={16} stroke="#fff"><path d="M6 9l6-7c1.500-1.500 3 0 2 1.500L8 10.500l-3 1zM5 6c-3 0-4 3-2.500 4.500M4 10c-4 1-2 5 1 3.500l3-2.500M11 8c3-1 4 2 1 3" /></Svg>
      </TrayButton>
      <Clock>5:07 PM<br />10/17/2020</Clock>
      <TrayButton $width={42} aria-label="Notifications, 1 new">
        <Svg w={26} h={26} stroke="none">
          <path d="M1 3h17v13H9l-4 4v-4H1z" fill="#fff" />
          <path d="M4 6.500h11M4 9.500h11M4 12.500h6" stroke="#555" />
          <circle cx="17.500" cy="18" r="7.500" fill="#29383c" stroke="#829298" />
          <text x="17.500" y="22" fill="#fff" fontSize="12" fontWeight="600" textAnchor="middle">1</text>
        </Svg>
      </TrayButton>
    </Tray>
  </Taskbar>
);

const App = () => {
  const [tab, setTab] = useState('Insert');
  const [name, setName] = useState('Chart 1');
  const [zoom, setZoom] = useState(100);

  return (
    <Page>
      <GlobalStyle />
      <Header />
      <TabRow>
        <TabList>
          {tabs.map((t) => (
            <Tab key={t} $active={t === tab} onClick={() => setTab(t)}>{t}</Tab>
          ))}
        </TabList>
        <ShareButton $width={67}>
          <Svg w={12} stroke="#217346"><path d="M4 3.500H1.500v8h9V8M3.500 8.500c0-3 2-4.500 5-4.500V1.500l3 3.500-3 3V6c-2.500 0-4 .5-5 2.500z" /></Svg>
          Share
        </ShareButton>
        <ShareButton $width={98}>
          <Svg w={12} stroke="#217346"><path d="M.5 1.500h11v7H5l-2.500 3v-3h-2z" /></Svg>
          Comments
        </ShareButton>
      </TabRow>
      <InsertRibbon />
      <FormulaBar>
        <NameBox>
          <input aria-label="Name Box" value={name} onChange={(e) => setName(e.target.value)} />
          <button aria-label="Names"><Svg w={5} h={4} stroke="none"><path d="M0 0h5L2.500 3z" fill="#666" /></Svg></button>
        </NameBox>
        <Grip $margin="5px 15px 0 14px"><i /></Grip>
        <FormulaButtons>
          <button aria-label="Cancel"><Svg w={12} stroke="#b4b4b4" strokeWidth="1.300"><path d="M1 1l10 10M11 1L1 11" /></Svg></button>
          <button aria-label="Enter"><Svg w={14} h={12} stroke="#b8b8b8" strokeWidth="2"><path d="M1 6l4 4 8-9" /></Svg></button>
          <FxButton aria-label="Insert Function">fx</FxButton>
        </FormulaButtons>
        <FormulaField>
          <input aria-label="Formula Bar" />
          <button aria-label="Collapse Formula Bar"><Svg w={8} h={7} stroke="#555" strokeWidth="1.700"><path d="M1 5l3-3 3 3" /></Svg></button>
        </FormulaField>
      </FormulaBar>
      <Worksheet />
      <SheetTabs>
        <TabNav>
          <Triangle dir="left" color="#bdbdbd" />
          <Triangle dir="right" color="#bdbdbd" />
        </TabNav>
        <SheetTab $width={113}>BLS Data Series</SheetTab>
        <SheetTab $width={60} $active>Sheet1</SheetTab>
        <AddSheet aria-label="New sheet">
          <Svg w={16} stroke="#777"><circle cx="8" cy="8" r="7" /><path d="M8 4.500v7M4.500 8h7" /></Svg>
        </AddSheet>
        <Grip $margin="5px 12px 0 0"><i /></Grip>
        <HScroll>
          <ScrollButton aria-label="Scroll left"><Triangle dir="left" /></ScrollButton>
          <Track $thumb="94%" />
          <ScrollButton aria-label="Scroll right"><Triangle dir="right" /></ScrollButton>
        </HScroll>
      </SheetTabs>
      <StatusBar>
        <ViewButton $active aria-label="Normal">
          <Svg w={13} stroke="#333"><path d="M.5.5h12v12H.5zM.5 4.500h12M.5 8.500h12M4.500.5v12M8.500.5v12" /></Svg>
        </ViewButton>
        <ViewButton aria-label="Page Layout">
          <Svg w={14} h={13}><path d="M.5.5h13v12H.5zM3.500 2.500h7v8h-7zM5 4.500h4M5 6.500h4M5 8.500h4" /></Svg>
        </ViewButton>
        <ViewButton aria-label="Page Break Preview">
          <Svg w={14} h={13}><path d="M.5.5h13v12H.5zM5.500.5v7M9.500.5v7H.5" /></Svg>
        </ViewButton>
        <ZoomControl>
          <button aria-label="Zoom out"><Svg w={9}><path d="M1 4.500h7" stroke="#888" /></Svg></button>
          <ZoomSlider type="range" min="0" max="200" value={zoom} aria-label="Zoom" onChange={(e) => setZoom(Number(e.target.value))} />
          <button aria-label="Zoom in"><Svg w={9}><path d="M1 4.500h7M4.500 1v7" stroke="#888" /></Svg></button>
        </ZoomControl>
        <ZoomValue>{zoom}%</ZoomValue>
      </StatusBar>
      <WindowsBar />
    </Page>
  );
};

export default App;
